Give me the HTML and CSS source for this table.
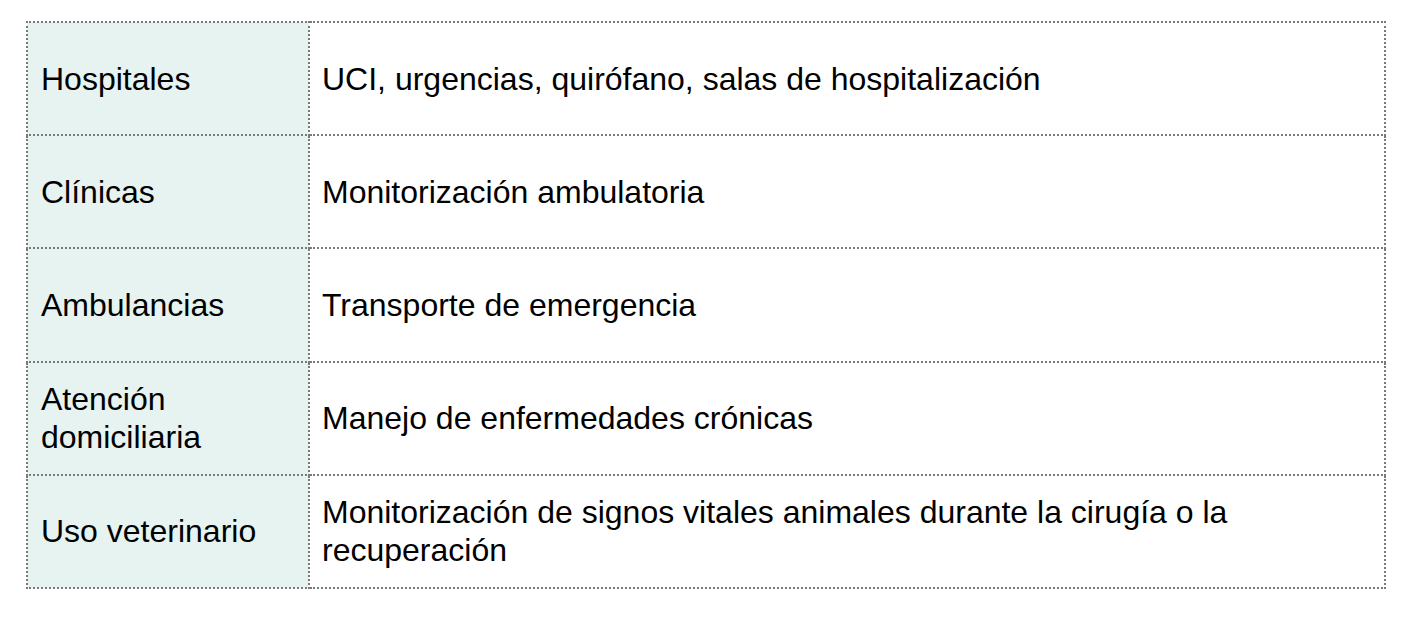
FILE: index.html
```html
<!DOCTYPE html>
<html lang="es">
<head>
<meta charset="utf-8">
<link rel="stylesheet" href="styles.css">
</head>
<body>
<table class="uses">
  <tr><td class="label">Hospitales</td><td class="desc">UCI, urgencias, quirófano, salas de hospitalización</td></tr>
  <tr><td class="label">Clínicas</td><td class="desc">Monitorización ambulatoria</td></tr>
  <tr><td class="label">Ambulancias</td><td class="desc">Transporte de emergencia</td></tr>
  <tr><td class="label">Atención domiciliaria</td><td class="desc">Manejo de enfermedades crónicas</td></tr>
  <tr><td class="label">Uso veterinario</td><td class="desc">Monitorización de signos vitales animales durante la cirugía o la recuperación</td></tr>
</table>
</body>
</html>
```

FILE: styles.css
```css
html, body {
  margin: 0;
  padding: 0;
  background: #ffffff;
}
body {
  padding: 21px 0 0 26px;
  font-family: "Liberation Sans", Arial, sans-serif;
  color: #000000;
}
.uses {
  border-collapse: collapse;
  width: 1360px;
  table-layout: fixed;
}
.uses td {
  border: 2px dotted #7a7a7a;
  height: 113.2px;
  box-sizing: border-box;
  padding: 0 12px 0 13px;
  font-size: 32px;
  line-height: 38px;
  vertical-align: middle;
}
.uses td.label {
  width: 282px;
  background: #e6f3f0;
}
.uses td.desc {
  padding-left: 12px;
}
```
